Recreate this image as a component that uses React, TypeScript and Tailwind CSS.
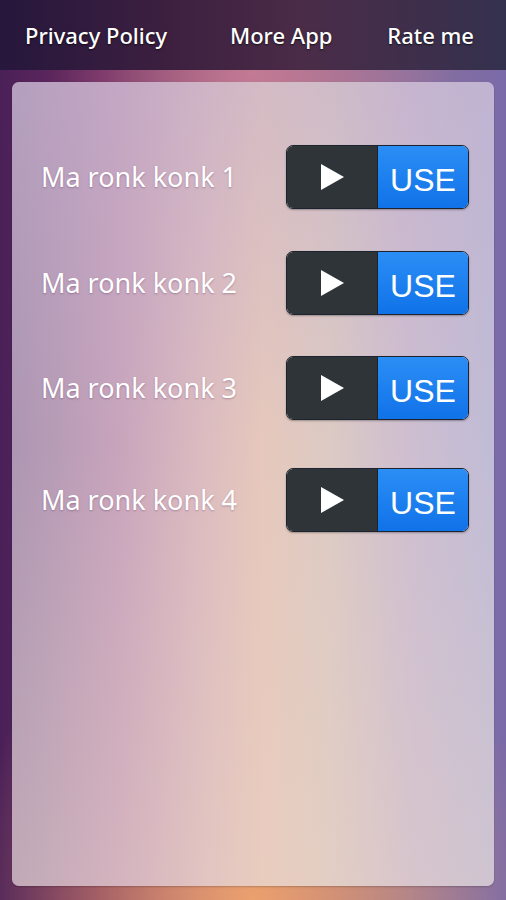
const rows = [
  { label: "Ma ronk konk 1", mt: "mt-[63px]" },
  { label: "Ma ronk konk 2", mt: "mt-[42px]" },
  { label: "Ma ronk konk 3", mt: "mt-[41px]" },
  { label: "Ma ronk konk 4", mt: "mt-[48px]" },
];

function PlayUseButton() {
  return (
    <div className="flex h-[64px] w-[183px] overflow-hidden rounded-[7px] border border-[#1c2430] shadow-[0_1px_2px_rgba(0,0,0,0.3)]">
      <div className="flex w-[91px] items-center justify-center bg-[#2f3438] border-r border-[#1e2226]">
        <svg width="26" height="28" viewBox="0 0 26 28">
          <polygon points="2,1 25,14 2,27" fill="#ffffff" />
        </svg>
      </div>
      <div className="flex flex-1 items-center justify-center pt-[5px] bg-gradient-to-b from-[#2b8ef5] to-[#0f72e8]">
        <span className="text-[32px] text-white font-['Liberation_Sans',Arial,sans-serif] leading-none">
          USE
        </span>
      </div>
    </div>
  );
}

export default function App() {
  return (
    <div className="relative h-[900px] w-[506px] overflow-hidden bg-[linear-gradient(90deg,#4a2058_0%,#6c2c60_20%,#a06878_50%,#8a709c_80%,#7a6aa8_100%)]">
      <div className="absolute inset-0 bg-[radial-gradient(ellipse_55%_40%_at_50%_100%,rgba(235,160,110,1),rgba(235,160,110,0)_100%)]" />
      <div className="absolute inset-0 bg-[radial-gradient(ellipse_40%_20%_at_50%_8%,rgba(210,130,160,0.7),rgba(210,130,160,0)_100%)]" />
      <div className="relative flex h-full flex-col">
        {/* Header */}
        <div className="flex h-[70px] items-center justify-between bg-[linear-gradient(90deg,#26173c_0%,#3e2040_35%,#4a2c48_60%,#34314e_100%)] pl-[25px] pr-[32px] font-['Noto_Sans',sans-serif] text-[22px] font-medium text-white [text-shadow:0_1px_2px_rgba(0,0,0,0.7)]">
          <span>Privacy Policy</span>
          <span className="ml-[8px]">More App</span>
          <span>Rate me</span>
        </div>

        {/* Card */}
        <div className="relative mx-[12px] mt-[12px] mb-[14px] flex flex-1 flex-col overflow-hidden rounded-[7px] bg-[linear-gradient(90deg,#ac96b2_0%,#c8a4bc_22%,#dcbcc0_40%,#e6c8bc_52%,#dccac4_66%,#cebed0_82%,#c0bcd6_100%)] shadow-[0_1px_2px_rgba(0,0,0,0.2)]">
          <div className="absolute inset-0 bg-[linear-gradient(180deg,rgba(190,170,205,0.45)_0%,rgba(190,170,205,0)_45%,rgba(240,215,195,0.3)_100%)]" />
          {rows.map((r) => (
            <div key={r.label} className={`relative flex items-center ${r.mt}`}>
              <div className="flex w-[254px] justify-center font-['Noto_Sans',sans-serif] text-[27px] text-white [text-shadow:0_1px_2px_rgba(80,40,80,0.35)]">
                {r.label}
              </div>
              <div className="ml-[20px]">
                <PlayUseButton />
              </div>
            </div>
          ))}
        </div>
      </div>
    </div>
  );
}
